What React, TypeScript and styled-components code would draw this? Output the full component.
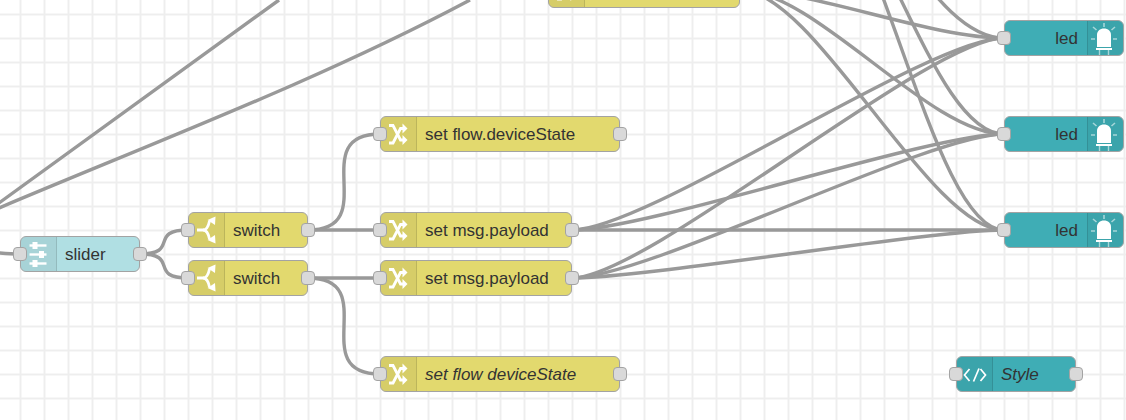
import React from "react";
import styled, { createGlobalStyle } from "styled-components";

const GlobalStyle = createGlobalStyle`
	html, body {
		margin: 0;
		padding: 0;
		background: #ffffff;
	}
`;

const Canvas = styled.div`
	position: relative;
	width: 1126px;
	height: 420px;
	overflow: hidden;
	font-family: "Liberation Sans", Arial, sans-serif;
	background-color: #ffffff;
	background-image: linear-gradient(to right, #eeeeee 2px, transparent 2px),
		linear-gradient(to bottom, #eeeeee 2px, transparent 2px);
	background-size: 24px 24px;
	background-position: 19.5px 13.5px;
`;

const WireLayer = styled.svg`
	position: absolute;
	left: 0;
	top: 0;
	width: 1126px;
	height: 420px;
`;

const Wire = styled.path`
	fill: none;
	stroke: #999999;
	stroke-width: 3.4;
`;

const NodeBox = styled.div<{ $x: number; $y: number; $w: number; $color: string; $right?: boolean }>`
	position: absolute;
	left: ${(p) => p.$x}px;
	top: ${(p) => p.$y}px;
	width: ${(p) => p.$w}px;
	height: 36px;
	box-sizing: border-box;
	display: flex;
	flex-direction: ${(p) => (p.$right ? "row-reverse" : "row")};
	align-items: stretch;
	background: ${(p) => p.$color};
	border: 1px solid #a3a3a3;
	border-radius: 6px;
`;

const IconBox = styled.div<{ $right?: boolean }>`
	flex: 0 0 35px;
	background: rgba(0, 0, 0, 0.05);
	border-${(p) => (p.$right ? "left" : "right")}: 1px solid rgba(0, 0, 0, 0.12);
	border-radius: ${(p) => (p.$right ? "0 5px 5px 0" : "5px 0 0 5px")};
	position: relative;
`;

const IconSvg = styled.svg`
	position: absolute;
	top: -1px;
	left: -1px;
	width: 36px;
	height: 36px;
	overflow: visible;
`;

const Label = styled.div<{ $right?: boolean; $italic?: boolean }>`
	flex: 1;
	display: flex;
	align-items: center;
	justify-content: ${(p) => (p.$right ? "flex-end" : "flex-start")};
	padding: 2px 9px 0 8px;
	font-size: 17px;
	font-style: ${(p) => (p.$italic ? "italic" : "normal")};
	color: #333333;
	white-space: nowrap;
`;

const Port = styled.div<{ $side: "in" | "out" }>`
	position: absolute;
	top: 10px;
	${(p) => (p.$side === "in" ? "left: -8px;" : "right: -7.5px;")}
	width: 14px;
	height: 14px;
	box-sizing: border-box;
	background: #d9d9d9;
	border: 1px solid #a3a3a3;
	border-radius: 4px;
`;

const IconLine = styled.path<{ $w?: number; $faint?: boolean }>`
	fill: none;
	stroke: #ffffff;
	stroke-width: ${(p) => p.$w ?? 2.8};
	stroke-linecap: butt;
	stroke-linejoin: miter;
	opacity: ${(p) => (p.$faint ? 0.55 : 1)};
`;

const IconFill = styled.path`
	fill: #ffffff;
	stroke: none;
`;

function ShuffleIcon() {
	return (
		<IconSvg viewBox="0 0 36 36">
			<IconLine d="M9 9.5H13L20.5 24H24" />
			<IconLine d="M9 27H13L20.5 12.5H24" />
			<IconFill d="M22.5 7.5L27.5 12.5L22.5 17.5Z" />
			<IconFill d="M22.5 19L27.5 24L22.5 29Z" />
		</IconSvg>
	);
}

function SwitchIcon() {
	return (
		<IconSvg viewBox="0 0 36 36">
			<IconLine d="M9 18H15C19 18 20.5 14 21.5 9" />
			<IconLine d="M15 18C19 18 20.5 22 21.5 27" />
			<IconFill d="M19.5 8L27.5 4.5L27 13Z" />
			<IconFill d="M19.5 28L27.5 31.5L27 23Z" />
		</IconSvg>
	);
}

function SliderIcon() {
	return (
		<IconSvg viewBox="0 0 36 36">
			<IconLine $w={2.4} d="M9.5 9.5H26.5" />
			<IconLine $w={2.4} d="M9.5 18.5H26.5" />
			<IconLine $w={2.4} d="M9.5 27.5H26.5" />
			<IconFill d="M12.5 6H17.5V13H12.5Z" />
			<IconFill d="M19 15H24V22H19Z" />
			<IconFill d="M12.5 24H17.5V31H12.5Z" />
		</IconSvg>
	);
}

function LedIcon() {
	return (
		<IconSvg viewBox="0 0 36 36">
			<IconLine $faint $w={1.6} d="M17 3V7M6 7L9.5 10M28 7L24.5 10M4 19H8M26 19H30" />
			<IconFill d="M10 27V15C10 11 13 8.5 17 8.5C21 8.5 24 11 24 15V27Z" />
			<IconFill d="M9 28H25V30H9Z" />
			<IconLine $w={1.4} $faint d="M12.5 30V35M21.5 30V35" />
		</IconSvg>
	);
}

function TemplateIcon() {
	return (
		<IconSvg viewBox="0 0 36 36">
			<IconLine $w={1.7} d="M13.5 13L8.5 19L13.5 25" />
			<IconLine $w={1.7} d="M24.5 13L29.5 19L24.5 25" />
			<IconLine $w={1.7} d="M23 12.5L17.5 25.5" />
		</IconSvg>
	);
}

const icons = {
	shuffle: ShuffleIcon,
	switch: SwitchIcon,
	slider: SliderIcon,
	led: LedIcon,
	template: TemplateIcon,
};

const YELLOW = "#e2d96e";
const TEAL = "#3fadb5";
const PALE = "#b0dfe3";

type FlowNode = {
	x: number;
	y: number;
	w: number;
	color: string;
	icon: keyof typeof icons;
	label: string;
	italic?: boolean;
	right?: boolean;
	input?: boolean;
	output?: boolean;
};

const nodes: FlowNode[] = [
	{ x: 548, y: -28, w: 192, color: YELLOW, icon: "shuffle", label: "", output: true },
	{ x: 20, y: 236, w: 120, color: PALE, icon: "slider", label: "slider", input: true, output: true },
	{ x: 188, y: 212, w: 120, color: YELLOW, icon: "switch", label: "switch", input: true, output: true },
	{ x: 188, y: 260, w: 120, color: YELLOW, icon: "switch", label: "switch", input: true, output: true },
	{ x: 380, y: 116, w: 240, color: YELLOW, icon: "shuffle", label: "set flow.deviceState", input: true, output: true },
	{ x: 380, y: 212, w: 192, color: YELLOW, icon: "shuffle", label: "set msg.payload", input: true, output: true },
	{ x: 380, y: 260, w: 192, color: YELLOW, icon: "shuffle", label: "set msg.payload", input: true, output: true },
	{ x: 380, y: 356, w: 240, color: YELLOW, icon: "shuffle", label: "set flow deviceState", italic: true, input: true, output: true },
	{ x: 1004, y: 20, w: 120, color: TEAL, icon: "led", label: "led", right: true, input: true },
	{ x: 1004, y: 116, w: 120, color: TEAL, icon: "led", label: "led", right: true, input: true },
	{ x: 1004, y: 212, w: 120, color: TEAL, icon: "led", label: "led", right: true, input: true },
	{ x: 956, y: 356, w: 120, color: TEAL, icon: "template", label: "Style", italic: true, input: true, output: true },
];

// same curve maths as the editor: control points 75px out, less when the ends are close
function wirePath(sx: number, sy: number, tx: number, ty: number) {
	const delta = Math.hypot(tx - sx, ty - sy);
	const scale = delta < 100 ? 0.75 - (0.75 * (100 - delta)) / 100 : 0.75;
	const off = scale * 100;
	return `M${sx} ${sy}C${sx + off} ${sy} ${tx - off} ${ty} ${tx} ${ty}`;
}

const ledInputs = [38, 134, 230];

const wires = [
	"M-30 251C-10 251 0 254 20 254",
	"M-1 203C93 134 186 67 279 0",
	"M-1 208C150 144 320 80 470 0",
	wirePath(140, 254, 188, 230),
	wirePath(140, 254, 188, 278),
	wirePath(308, 230, 380, 134),
	wirePath(308, 230, 380, 230),
	wirePath(308, 278, 380, 278),
	wirePath(308, 278, 380, 374),
	...ledInputs.flatMap((y) => [
		wirePath(740, -10, 1004, y),
		wirePath(800, -130, 1004, y),
		wirePath(572, 230, 1004, y),
		wirePath(572, 278, 1004, y),
	]),
];

export default function App() {
	return (
		<>
			<GlobalStyle />
			<Canvas>
				<WireLayer viewBox="0 0 1126 420">
					{wires.map((d, i) => (
						<Wire key={i} d={d} />
					))}
				</WireLayer>
				{nodes.map((n, i) => {
					const Icon = icons[n.icon];
					return (
						<NodeBox key={i} $x={n.x} $y={n.y} $w={n.w} $color={n.color} $right={n.right}>
							<IconBox $right={n.right}>
								<Icon />
							</IconBox>
							<Label $right={n.right} $italic={n.italic}>
								{n.label}
							</Label>
							{n.input && <Port $side="in" />}
							{n.output && <Port $side="out" />}
						</NodeBox>
					);
				})}
			</Canvas>
		</>
	);
}
